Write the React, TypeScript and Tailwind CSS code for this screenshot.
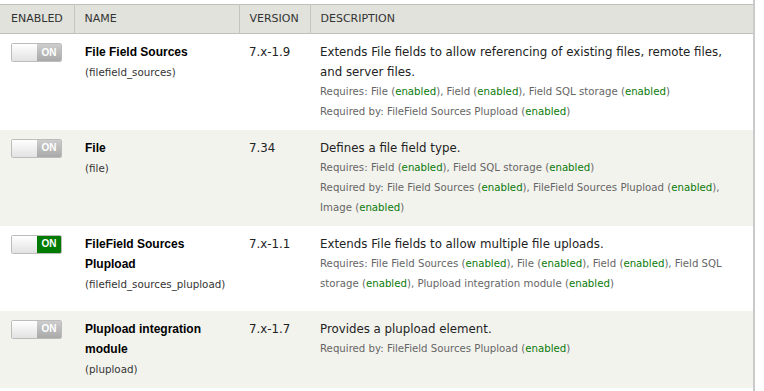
import React from "react";

type Mod = {
  enabled: boolean;
  name: string;
  machine: string;
  version: string;
  desc: string;
  requires?: string[];
  requiredBy?: string[];
  height: string;
};

const modules: Mod[] = [
  {
    enabled: false,
    name: "File Field Sources",
    machine: "filefield_sources",
    version: "7.x-1.9",
    desc: "Extends File fields to allow referencing of existing files, remote files, and server files.",
    requires: ["File", "Field", "Field SQL storage"],
    requiredBy: ["FileField Sources Plupload"],
    height: "h-[96px]",
  },
  {
    enabled: false,
    name: "File",
    machine: "file",
    version: "7.34",
    desc: "Defines a file field type.",
    requires: ["Field", "Field SQL storage"],
    requiredBy: ["File Field Sources", "FileField Sources Plupload", "Image"],
    height: "h-[96px]",
  },
  {
    enabled: true,
    name: "FileField Sources Plupload",
    machine: "filefield_sources_plupload",
    version: "7.x-1.1",
    desc: "Extends File fields to allow multiple file uploads.",
    requires: ["File Field Sources", "File", "Field", "Field SQL storage", "Plupload integration module"],
    height: "h-[85px]",
  },
  {
    enabled: false,
    name: "Plupload integration module",
    machine: "plupload",
    version: "7.x-1.7",
    desc: "Provides a plupload element.",
    requiredBy: ["FileField Sources Plupload"],
    height: "h-[77px]",
  },
];

function Toggle({ on }: { on: boolean }) {
  return (
    <div className="mt-[1px] flex h-[19px] w-[51px] overflow-hidden rounded-[2px] border border-[#bcbcbc]">
      <div className="flex-1 bg-linear-to-b from-white to-[#e2e2e2]" />
      <div
        className={
          on
            ? "flex w-[24px] items-center justify-center bg-[#007a00]"
            : "flex w-[24px] items-center justify-center bg-linear-to-b from-[#cdcdcd] to-[#a9a9a9]"
        }
      >
        <span className="font-['Liberation_Sans',Arial,sans-serif] text-[10px] font-bold leading-none text-white">
          ON
        </span>
      </div>
    </div>
  );
}

function ReqLine({ label, items }: { label: string; items: string[] }) {
  return (
    <div className="text-[10.2px] leading-[20px] text-[#666]">
      {label}:{" "}
      {items.map((it, i) => (
        <React.Fragment key={it}>
          {it} (<span className="text-[#0a7a0a]">enabled</span>)
          {i < items.length - 1 ? ", " : ""}
        </React.Fragment>
      ))}
    </div>
  );
}

export default function App() {
  return (
    <div className="flex h-screen w-full bg-white font-['DejaVu_Sans',sans-serif] text-[#222]">
      <div className="w-[753px] pt-[4px]">
        <table className="w-full table-fixed border-collapse">
          <colgroup>
            <col className="w-[74px]" />
            <col className="w-[165px]" />
            <col className="w-[71px]" />
            <col />
          </colgroup>
          <thead>
            <tr className="h-[29px] border-y border-[#bfc0ba] bg-[#e1e2dc] text-left text-[11px] uppercase text-[#333]">
              <th className="px-[11px] font-normal">Enabled</th>
              <th className="border-l border-[#c4c5bf] px-[10px] font-normal">Name</th>
              <th className="border-l border-[#c4c5bf] px-[10px] font-normal">Version</th>
              <th className="border-l border-[#c4c5bf] px-[10px] font-normal">Description</th>
            </tr>
          </thead>
          <tbody>
            {modules.map((m, idx) => (
              <tr key={m.machine} className={`${m.height} ${idx % 2 === 1 ? "bg-[#f3f3ee]" : "bg-white"}`}>
                <td className="px-[11px] pt-[8px] align-top">
                  <Toggle on={m.enabled} />
                </td>
                <td className="pl-[11px] pr-[8px] pt-[8px] align-top">
                  <div className="font-['Liberation_Sans',Arial,sans-serif] text-[12px] font-bold leading-[20px] text-black">
                    {m.name}
                  </div>
                  <div className="text-[10.3px] leading-[20px] text-[#333]">({m.machine})</div>
                </td>
                <td className="px-[10px] pt-[8px] align-top text-[11.8px] leading-[20px]">{m.version}</td>
                <td className="pl-[10px] pr-[8px] pt-[8px] align-top">
                  <div className="text-[11.8px] leading-[20px]">{m.desc}</div>
                  {m.requires && <ReqLine label="Requires" items={m.requires} />}
                  {m.requiredBy && <ReqLine label="Required by" items={m.requiredBy} />}
                </td>
              </tr>
            ))}
          </tbody>
        </table>
      </div>
      <div className="w-[2px] bg-[#cacaca]" />
    </div>
  );
}
